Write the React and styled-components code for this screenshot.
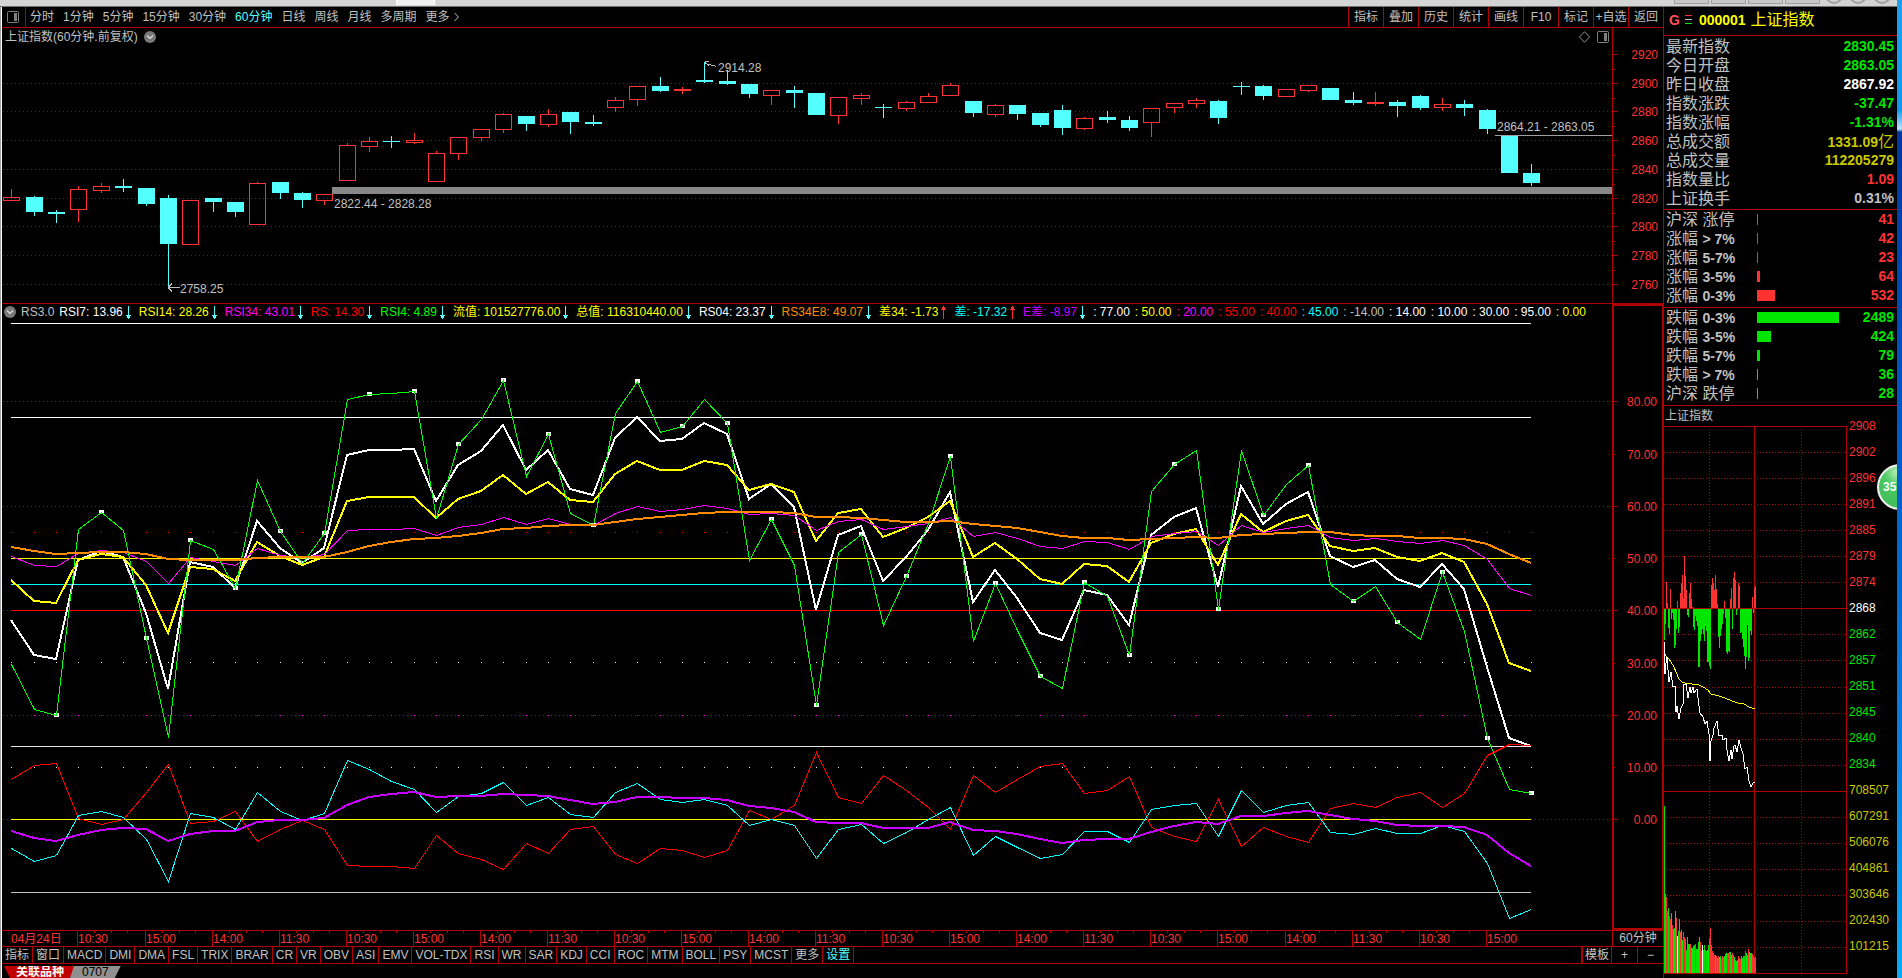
import React from 'react';
import styled, { createGlobalStyle } from 'styled-components';

const LINE = '#b00000';
const RED = '#ff3232';
const CYAN = '#54ffff';
const GREEN = '#00e600';
const GRAY = '#c0c0c0';

const periods = ['分时', '1分钟', '5分钟', '15分钟', '30分钟', '60分钟', '日线', '周线', '月线', '多周期', '更多'];
const tools = ['指标', '叠加', '历史', '统计', '画线', 'F10', '标记', '+自选', '返回'];
const indicators = [
  '指标', '窗口', 'MACD', 'DMI', 'DMA', 'FSL', 'TRIX', 'BRAR', 'CR', 'VR', 'OBV', 'ASI', 'EMV', 'VOL-TDX',
  'RSI', 'WR', 'SAR', 'KDJ', 'CCI', 'ROC', 'MTM', 'BOLL', 'PSY', 'MCST', '更多', '设置',
];

const readings = [
  { text: 'RSI7: 13.96', color: '#ffffff', dir: 'down' },
  { text: 'RSI14: 28.26', color: '#ffff00', dir: 'down' },
  { text: 'RSI34: 43.01', color: '#ff00ff', dir: 'down' },
  { text: 'RS: 14.30', color: '#ff0000', dir: 'down' },
  { text: 'RSI4: 4.89', color: '#00ff00', dir: 'down' },
  { text: '流值: 101527776.00', color: '#ffff00', dir: 'down' },
  { text: '总值: 116310440.00', color: '#ffff00', dir: 'down' },
  { text: 'RS04: 23.37', color: '#ffffff', dir: 'down' },
  { text: 'RS34E8: 49.07', color: '#ff8c00', dir: 'down' },
  { text: '差34: -1.73', color: '#ffff00', dir: 'up' },
  { text: '差: -17.32', color: '#00ffff', dir: 'up' },
  { text: 'E差: -8.97', color: '#c800ff', dir: 'down' },
];

const levels = [
  { text: ': 77.00', color: '#ffffff' },
  { text: ': 50.00', color: '#ffff00' },
  { text: ': 20.00', color: '#ff00ff' },
  { text: ': 55.00', color: '#ff0000' },
  { text: ': 40.00', color: '#ff0000' },
  { text: ': 45.00', color: '#00ffff' },
  { text: ': -14.00', color: '#c0c0c0' },
  { text: ': 14.00', color: '#ffffff' },
  { text: ': 10.00', color: '#ffffff' },
  { text: ': 30.00', color: '#ffffff' },
  { text: ': 95.00', color: '#ffffff' },
  { text: ': 0.00', color: '#ffff00' },
];

const quotes = [
  { name: '最新指数', value: '2830.45', color: GREEN },
  { name: '今日开盘', value: '2863.05', color: GREEN },
  { name: '昨日收盘', value: '2867.92', color: '#ffffff' },
  { name: '指数涨跌', value: '-37.47', color: GREEN },
  { name: '指数涨幅', value: '-1.31%', color: GREEN },
  { name: '总成交额', value: '1331.09', unit: '亿', color: '#c8c800' },
  { name: '总成交量', value: '112205279', color: '#c8c800' },
  { name: '指数量比', value: '1.09', color: RED },
  { name: '上证换手', value: '0.31%', color: GRAY },
];

const risers = [
  { name: '沪深 涨停', range: '', count: 41, bar: 1 },
  { name: '涨幅', range: '> 7%', count: 42, bar: 1 },
  { name: '涨幅', range: '5-7%', count: 23, bar: 1 },
  { name: '涨幅', range: '3-5%', count: 64, bar: 3 },
  { name: '涨幅', range: '0-3%', count: 532, bar: 18 },
];

const fallers = [
  { name: '跌幅', range: '0-3%', count: 2489, bar: 82 },
  { name: '跌幅', range: '3-5%', count: 424, bar: 14 },
  { name: '跌幅', range: '5-7%', count: 79, bar: 3 },
  { name: '跌幅', range: '> 7%', count: 36, bar: 1 },
  { name: '沪深 跌停', range: '', count: 28, bar: 1 },
];

// up/down, high, body top, body bottom, low
const candles = [
  ['u', 189, 197, 200, 200], ['d', 196, 197, 212, 216], ['d', 210, 212, 214, 223], ['u', 186, 189, 209, 222],
  ['u', 183, 186, 190, 193], ['d', 179, 186, 188, 192], ['d', 188, 188, 204, 206], ['d', 195, 198, 244, 286],
  ['u', 200, 200, 244, 244], ['d', 198, 198, 202, 212], ['d', 202, 202, 212, 217], ['u', 182, 183, 224, 224],
  ['d', 182, 182, 193, 199], ['d', 192, 193, 200, 208], ['u', 194, 194, 200, 205], ['u', 143, 145, 180, 180],
  ['u', 137, 141, 146, 152], ['d', 136, 141, 142, 148], ['u', 133, 140, 142, 144], ['u', 151, 153, 181, 181],
  ['u', 137, 137, 153, 160], ['u', 129, 129, 137, 141], ['u', 113, 114, 129, 133], ['d', 116, 116, 124, 131],
  ['u', 109, 114, 124, 127], ['d', 112, 112, 122, 134], ['d', 115, 122, 124, 126], ['u', 97, 100, 107, 112],
  ['u', 86, 86, 99, 106], ['d', 77, 86, 91, 92], ['u', 87, 89, 90, 94], ['d', 62, 80, 82, 83],
  ['d', 70, 81, 84, 85], ['d', 84, 84, 94, 98], ['u', 90, 90, 95, 105], ['d', 86, 90, 93, 108],
  ['d', 93, 93, 115, 115], ['u', 97, 97, 115, 124], ['u', 93, 95, 98, 105], ['d', 104, 107, 108, 118],
  ['u', 101, 102, 108, 111], ['u', 93, 96, 102, 102], ['u', 83, 85, 95, 95], ['d', 101, 101, 113, 117],
  ['u', 104, 105, 114, 117], ['d', 105, 105, 114, 120], ['d', 113, 113, 125, 127], ['d', 105, 110, 128, 135],
  ['u', 117, 118, 128, 130], ['d', 111, 117, 120, 123], ['d', 116, 120, 128, 131], ['u', 108, 108, 122, 137],
  ['u', 103, 103, 107, 113], ['u', 98, 100, 103, 108], ['d', 100, 101, 118, 124], ['d', 82, 86, 87, 95],
  ['d', 85, 86, 96, 100], ['u', 89, 89, 96, 96], ['u', 85, 85, 90, 92], ['d', 88, 88, 100, 100],
  ['d', 92, 100, 103, 105], ['u', 92, 102, 103, 106], ['d', 100, 102, 106, 117], ['d', 95, 96, 108, 110],
  ['u', 98, 104, 107, 111], ['d', 100, 104, 108, 116], ['d', 109, 110, 129, 134], ['d', 136, 136, 173, 173],
  ['d', 164, 173, 183, 186],
];

const rsi4 = [
  664, 709, 715, 529, 512, 530, 638, 737, 540, 549, 588, 480, 531, 563, 533, 399, 394, 393, 391, 518, 444, 419, 380,
  476, 434, 513, 525, 413, 381, 432, 426, 399, 423, 560, 519, 565, 705, 552, 534, 625, 576, 523, 456, 641, 583, 630,
  676, 688, 582, 596, 655, 491, 464, 450, 609, 450, 515, 484, 465, 584, 601, 586, 622, 639, 572, 631, 738, 789, 793,
];

const series = [
  {
    color: '#ffffff',
    width: 2,
    data: [
      620, 655, 659, 560, 551, 557, 613, 689, 562, 567, 588, 521, 548, 563, 548, 455, 450, 450, 449, 501, 465, 451,
      425, 470, 450, 489, 495, 438, 417, 441, 439, 423, 434, 499, 484, 507, 610, 535, 526, 581, 557, 530, 492, 602,
      570, 598, 633, 640, 590, 595, 625, 535, 517, 508, 587, 486, 524, 504, 492, 556, 567, 560, 579, 587, 564, 589,
      667, 738, 746,
    ],
  },
  {
    color: '#ffff00',
    width: 2,
    data: [
      580, 601, 603, 560, 554, 557, 585, 633, 567, 569, 581, 542, 556, 565, 557, 501, 497, 497, 497, 518, 499, 491,
      475, 494, 482, 500, 502, 474, 461, 470, 470, 461, 465, 490, 484, 492, 541, 513, 509, 537, 528, 517, 501, 557,
      543, 559, 579, 584, 564, 566, 582, 543, 534, 529, 565, 514, 532, 521, 515, 546, 551, 548, 557, 561, 553, 562,
      604, 663, 671,
    ],
  },
  {
    color: '#ff00ff',
    width: 1,
    data: [
      556, 565, 566, 553, 550, 552, 561, 583, 557, 561, 565, 548, 555, 557, 554, 530, 529, 529, 528, 535, 527, 524,
      517, 524, 518, 524, 525, 513, 506, 511, 509, 505, 508, 514, 513, 515, 530, 521, 519, 529, 526, 523, 517, 536,
      532, 538, 546, 548, 541, 542, 549, 536, 533, 531, 545, 525, 532, 528, 525, 537, 540, 538, 541, 543, 540, 545,
      559, 588, 595,
    ],
  },
  {
    color: '#ff0000',
    width: 1,
    data: [
      779, 765, 763, 818, 824, 819, 792, 764, 823, 821, 811, 841, 829, 820, 829, 865, 866, 866, 868, 835, 853, 859,
      869, 843, 853, 829, 826, 854, 863, 848, 850, 857, 850, 810, 819, 805, 752, 797, 803, 775, 790, 807, 829, 775,
      792, 779, 766, 763, 793, 790, 776, 827, 836, 841, 799, 846, 827, 836, 842, 808, 803, 807, 797, 792, 807, 793,
      755, 744, 745,
    ],
  },
  { color: '#00ff00', width: 1, data: rsi4 },
  {
    color: '#ff8c00',
    width: 2,
    data: [
      547, 551, 554, 553, 552, 552, 554, 559, 560, 560, 560, 558, 557, 557, 557, 552, 546, 542, 539, 538, 536, 533,
      529, 528, 526, 525, 525, 522, 519, 517, 515, 513, 512, 512, 512, 513, 517, 517, 518, 520, 522, 522, 521, 524,
      526, 528, 532, 536, 538, 538, 540, 539, 538, 537, 538, 535, 534, 533, 532, 532, 535, 536, 536, 538, 538, 539,
      544, 554, 563,
    ],
  },
  {
    color: '#00ffff',
    width: 1,
    data: [
      848, 861, 855, 815, 811, 817, 839, 881, 813, 817, 829, 792, 811, 820, 813, 760, 769, 781, 789, 812, 796, 793,
      782, 805, 797, 814, 817, 792, 783, 799, 802, 799, 805, 825, 819, 825, 858, 829, 824, 843, 832, 819, 807, 855,
      836, 847, 858, 854, 831, 831, 842, 809, 805, 803, 836, 790, 812, 805, 802, 832, 834, 828, 833, 833, 825, 831,
      863, 918, 909,
    ],
  },
  {
    color: '#c800ff',
    width: 2,
    data: [
      831, 838, 841, 835, 830, 828, 829, 841, 834, 831, 831, 822, 820, 820, 818, 805, 797, 794, 792, 797, 796, 796,
      794, 795, 796, 800, 804, 802, 797, 797, 798, 798, 800, 806, 808, 812, 822, 823, 823, 828, 828, 828, 822, 830,
      831, 834, 839, 843, 840, 839, 839, 832, 826, 822, 824, 816, 816, 813, 811, 815, 819, 821, 825, 826, 826, 827,
      835, 853, 866,
    ],
  },
];

const hLines = [
  { y: 323, color: '#ffffff' },
  { y: 417, color: '#ffffff' },
  { y: 558, color: '#ffff00' },
  { y: 584, color: '#00ffff' },
  { y: 610, color: '#ff0000' },
  { y: 746, color: '#e6e6e6' },
  { y: 819, color: '#ffff00' },
  { y: 892, color: '#c0c0c0' },
];

const dotRows = [
  { y: 532, color: '#ff0000' },
  { y: 662, color: '#ffffff' },
  { y: 715, color: '#ff00ff' },
  { y: 767, color: '#ffffff' },
];

// net strength per minute column, positive is drawn red
const strength = [
  -31, -15, 26, 5, -19, -25, 19, -10, -4, -11, -39, -36, -20, 7, -24, -18, 15, 25, 33, 10, 52, 32, 18, -6, -8, 15,
  25, 9, 1, -18, -21, -7, -12, -17, -58, -58, -32, -25, -20, -25, -32, -17, -22, -53, -53, -57, -60, 23, 30, 25, 18,
  33, 19, 4, -28, -39, -27, -20, -15, -5, 7, -9, -43, -45, -42, -43, 9, 20, -20, 30, 36, 28, -6, -1, 25, 22, -24,
  -23, -30, -38, -47, -60, -48, -16, -52, -49, -22, -26, 11, -4, 20, 22,
];

const volumes = [
  167, 79, 76, 62, 65, 57, 54, 60, 48, 44, 45, 62, 55, 37, 42, 54, 41, 43, 33, 41, 36, 34, 23, 36, 29, 29, 29, 25,
  25, 27, 28, 29, 24, 24, 31, 36, 31, 22, 28, 23, 28, 23, 22, 23, 28, 35, 45, 28, 22, 20, 18, 18, 17, 15, 17, 16,
  17, 15, 17, 16, 17, 19, 20, 20, 20, 21, 21, 18, 20, 18, 16, 13, 12, 13, 17, 15, 14, 17, 15, 17, 17, 22, 20, 18,
  24, 21, 20, 20, 19, 17, 15, 16,
];
const volumeSides =
  'ggrrgrrgrgggrwggrggrrrggggrggggrggggrrwggrgggrrrrrrgrgrggrrrgggrrrggrrggggrrrggggrggrgggrrrrg';
const sideColor = { g: GREEN, r: RED, w: '#ffffff' };

const averageLine = [
  [0, 226], [2, 230], [5, 233], [7, 236], [10, 241], [12, 246], [15, 253], [18, 256], [21, 257], [35, 259],
  [39, 261], [44, 264], [47, 268], [55, 270], [61, 272], [68, 275], [74, 277], [80, 278], [85, 281], [91, 283],
];
const priceLine = [
  [0, 215], [1, 248], [2, 237], [3, 231], [5, 256], [7, 246], [9, 261], [11, 260], [12, 286], [13, 280], [15, 293],
  [17, 282], [19, 278], [20, 258], [22, 258], [24, 272], [26, 261], [27, 267], [29, 261], [30, 267], [33, 263],
  [35, 280], [36, 287], [39, 291], [41, 298], [43, 295], [45, 308], [46, 335], [47, 315], [49, 309], [50, 302],
  [53, 295], [55, 310], [58, 309], [59, 314], [62, 312], [63, 324], [65, 335], [67, 324], [68, 333], [70, 320],
  [71, 319], [73, 326], [75, 314], [77, 322], [79, 328], [81, 343], [83, 341], [85, 355], [87, 361], [89, 357],
  [91, 356],
];

const trendLabels = [
  ['2908', RED], ['2902', RED], ['2896', RED], ['2891', RED], ['2885', RED], ['2879', RED], ['2874', RED],
  ['2868', '#ffffff'], ['2862', GREEN], ['2857', GREEN], ['2851', GREEN], ['2845', GREEN], ['2840', GREEN],
  ['2834', GREEN], ['708507', '#c8c800'], ['607291', '#c8c800'], ['506076', '#c8c800'], ['404861', '#c8c800'],
  ['303646', '#c8c800'], ['202430', '#c8c800'], ['101215', '#c8c800'],
];

const CANDLE_TOP = 46;
const RSI_TOP = 322;
const barX = (i) => Math.round(9.4 + i * 22.353);
const timeLabels = ['10:30', '15:00', '14:00', '11:30'];

const Arrow = ({ dir }) => (
  <ArrowIcon width='5' height='13' viewBox='0 0 5 13' aria-hidden='true'>
    {dir === 'down' ? (
      <path d='M2 0h1v9h2v1h-1v2h-1v1h-1v-1h-1v-2h-1v-1h2z' fill={CYAN} />
    ) : (
      <path d='M2 13h1V4h2V3H4V1H3V0H2v1H1v2H0v1h2z' fill={RED} />
    )}
  </ArrowIcon>
);

const PanelIcon = () => (
  <svg width='12' height='12' viewBox='0 0 12 12' aria-hidden='true'>
    <rect x='0.5' y='0.5' width='11' height='11' rx='1' fill='none' stroke='#808080' />
    <rect x='7' y='2' width='3' height='8' fill='#808080' />
  </svg>
);

const CircleDown = () => (
  <svg width='12' height='12' viewBox='0 0 12 12' aria-hidden='true'>
    <circle cx='6' cy='6' r='6' fill='#787878' />
    <path d='M3 4.5l3 3 3-3' fill='none' stroke='#e0e0e0' strokeWidth='1.2' />
  </svg>
);

const GridLine = ({ y }) => (
  <line x1='1' x2='100%' y1={y + 0.5} y2={y + 0.5} stroke={LINE} strokeDasharray='1 3' />
);

const CandleChart = () => (
  <Chart height='257' shapeRendering='crispEdges'>
    {[83, 111, 140, 169, 198, 226, 255, 284].map((y) => (
      <GridLine key={y} y={y - CANDLE_TOP} />
    ))}
    <rect x='330' y='141' width='100%' height='7' fill='#888888' />
    <rect x='1493' y='89' width='100%' height='1' fill='#a0a0a0' />
    {candles.map(([kind, high, top, bottom, low], i) => {
      const x = barX(i);
      const color = kind === 'u' ? RED : CYAN;
      const t = top - CANDLE_TOP;
      const b = bottom - CANDLE_TOP;
      return (
        <g key={i}>
          <rect x={x} y={high - CANDLE_TOP} width='1' height={Math.max(top - high, 0)} fill={color} />
          <rect x={x} y={b} width='1' height={Math.max(low - bottom, 0)} fill={color} />
          {kind === 'u' ? (
            <rect x={x - 7.5} y={t + 0.5} width='16' height={Math.max(b - t, 1)} fill='none' stroke={color} />
          ) : (
            <rect x={x - 8} y={t} width='17' height={b - t} fill={color} />
          )}
        </g>
      );
    })}
    <path d='M702.5 15.5h4M703 16l4 4M703.500 17.500l11 3' stroke={GRAY} fill='none' />
    <path d='M166 241.500h12M166 241.500l4 -4M166 241.500l4 4' stroke={GRAY} fill='none' />
    <Mark x='716' y='26'>2914.28</Mark>
    <Mark x='178' y='247'>2758.25</Mark>
    <Mark x='332' y='162'>2822.44 - 2828.28</Mark>
    <Mark x='1495' y='85'>2864.21 - 2863.05</Mark>
  </Chart>
);

const PriceAxis = () => (
  <Axis height='275' shapeRendering='crispEdges'>
    {[54, 83, 111, 140, 169, 198, 226, 255, 284].map((y, i) => (
      <g key={y}>
        <line x1='0' x2='5' y1={y - 27.5} y2={y - 27.5} stroke={LINE} />
        {i < 8 && <line x1='0' x2='2' y1={y - 12.5} y2={y - 12.5} stroke={LINE} />}
        <AxisText x='45' y={y - 23}>{2920 - i * 20}</AxisText>
      </g>
    ))}
  </Axis>
);

const IndicatorChart = () => (
  <Chart height='608' shapeRendering='crispEdges'>
    {[401, 506, 610, 715, 819].map((y) => (
      <GridLine key={y} y={y - RSI_TOP} />
    ))}
    {dotRows.map((row) =>
      candles.map((c, i) => (
        <rect key={row.y + '-' + i} x={barX(i)} y={row.y - RSI_TOP} width='1' height='1' fill={row.color} />
      ))
    )}
    {hLines.map((l) => (
      <rect key={l.y} x='9' y={l.y - RSI_TOP} width='1520' height='1' fill={l.color} />
    ))}
    {rsi4.map((y, i) =>
      i > 0 && i % 2 === 0 ? (
        <rect key={i} x={barX(i) - 2} y={y - RSI_TOP - 2} width='5' height='4' fill='#ffffff' />
      ) : null
    )}
    {series.map((s, n) => {
      const shift = s.width === 1 ? 0.5 : 0;
      return (
        <polyline
          key={n}
          points={s.data.map((y, i) => `${barX(i) + shift},${y - RSI_TOP + shift}`).join(' ')}
          fill='none'
          stroke={s.color}
          strokeWidth={s.width}
        />
      );
    })}
  </Chart>
);

const IndicatorAxis = () => (
  <Axis height='622' shapeRendering='crispEdges'>
    {[401, 454, 506, 558, 610, 663, 715, 767, 819].map((y, i) => (
      <g key={y}>
        <line x1='0' x2={i % 2 ? 1 : 4} y1={y - 305.5} y2={y - 305.5} stroke={LINE} />
        <AxisText x='43' y={y - 301}>{(80 - i * 10).toFixed(2)}</AxisText>
      </g>
    ))}
  </Axis>
);

const TimeAxis = () => (
  <Chart height='15' shapeRendering='crispEdges'>
    <TimeText x='9' y='12'>04月24日</TimeText>
    {Array.from({ length: 22 }, (_, n) => {
      const x = barX(3 + n * 3);
      return (
        <g key={n}>
          <rect x={x - 1} y='0' width='1' height='15' fill={LINE} />
          {n < 21 &&
            [16, 33, 49].map((d) => <rect key={d} x={x + d} y='0' width='1' height='2' fill={LINE} />)}
          <TimeText x={x} y='12'>{timeLabels[n % 4]}</TimeText>
        </g>
      );
    })}
  </Chart>
);

const trendY = (i) => Math.round(i * 26.05);

const TrendChart = () => (
  <Chart height='548' shapeRendering='crispEdges'>
    {trendLabels.map(([text], i) => (
      <line
        key={text}
        x1='0'
        x2='183'
        y1={trendY(i) + 0.5}
        y2={trendY(i) + 0.5}
        stroke={LINE}
        strokeDasharray={i % 7 === 0 ? undefined : '1 2'}
      />
    ))}
    <line x1='0' x2='183' y1='547.5' y2='547.5' stroke={LINE} />
    <line x1='45.5' x2='45.5' y1='0' y2='547' stroke={LINE} strokeDasharray='1 2' />
    <line x1='137.5' x2='137.5' y1='0' y2='547' stroke={LINE} strokeDasharray='1 2' />
    <line x1='90.5' x2='90.5' y1='0' y2='547' stroke={LINE} />
    <line x1='182.5' x2='182.5' y1='0' y2='547' stroke={LINE} />
    {strength.map((v, i) => (
      <rect
        key={i}
        x={i}
        y={v > 0 ? 182 - v : 183}
        width='1'
        height={Math.abs(v)}
        fill={v > 0 ? RED : GREEN}
      />
    ))}
    {volumes.map((v, i) => (
      <rect key={i} x={i} y={547 - v} width='1' height={v} fill={sideColor[volumeSides[i]]} />
    ))}
    <polyline points={averageLine.map((p) => p.join()).join(' ')} fill='none' stroke='#ffff00' />
    <polyline points={priceLine.map((p) => p.join()).join(' ')} fill='none' stroke='#ffffff' />
  </Chart>
);

const Breadth = ({ rows, color }) => (
  <Section $raised>
    {rows.map((row) => (
      <Row key={row.name + row.range}>
        <RangeName>
          {row.name} <b>{row.range}</b>
        </RangeName>
        <BarCell>
          <Bar $color={color} style={{ width: row.bar }} />
        </BarCell>
        <Value $color={color}>{row.count}</Value>
      </Row>
    ))}
  </Section>
);

const App = () => {
  return (
    <Screen>
      <GlobalStyle />
      <Window>
        <TitleBar>
          <TitleTab />
          <TitleButtons>
            <i />
            <i />
            <i />
            <i />
            <em />
            <em />
            <em />
          </TitleButtons>
        </TitleBar>
        <Body>
          <Main>
            <Toolbar>
              <IconButton aria-label='侧栏'>
                <PanelIcon />
              </IconButton>
              <Periods>
                {periods.map((p) => (
                  <PeriodButton key={p} $active={p === '60分钟'}>
                    {p}
                  </PeriodButton>
                ))}
                <svg width='5' height='10' viewBox='0 0 5 10' aria-hidden='true'>
                  <path d='M0.500 1l4 4-4 4' fill='none' stroke={GRAY} />
                </svg>
              </Periods>
              {tools.map((t) => (
                <ToolButton key={t}>{t}</ToolButton>
              ))}
            </Toolbar>

            <Panel>
              <PanelBody>
                <PanelHead>
                  <span>上证指数(60分钟.前复权)</span>
                  <CircleDown />
                  <HeadIcons>
                    <svg width='11' height='12' viewBox='0 0 11 12' aria-hidden='true'>
                      <path d='M5.500 0.700l5 5.300-5 5.300-5-5.300z' fill='none' stroke='#909090' />
                    </svg>
                    <PanelIcon />
                  </HeadIcons>
                </PanelHead>
                <CandleChart />
              </PanelBody>
              <AxisColumn>
                <PriceAxis />
              </AxisColumn>
            </Panel>

            <Panel>
              <PanelBody>
                <Readings>
                  <CircleDown />
                  <Reading $color={GRAY}>RS3.0</Reading>
                  {readings.map((r) => (
                    <Reading key={r.text} $color={r.color}>
                      {r.text}
                      <Arrow dir={r.dir} />
                    </Reading>
                  ))}
                  {levels.map((l) => (
                    <Level key={l.text} $color={l.color}>
                      {l.text}
                    </Level>
                  ))}
                </Readings>
                <IndicatorChart />
              </PanelBody>
              <AxisColumn $framed>
                <IndicatorAxis />
              </AxisColumn>
            </Panel>

            <TimeRow>
              <PanelBody>
                <TimeAxis />
              </PanelBody>
              <PeriodCell>60分钟</PeriodCell>
            </TimeRow>

            <TabRow>
              {indicators.map((name, i) => (
                <TabButton key={name + i} $active={name === '设置'}>
                  {name}
                </TabButton>
              ))}
              <Spacer />
              <EndButton $first>模板</EndButton>
              <EndButton>+</EndButton>
              <EndButton>−</EndButton>
            </TabRow>

            <Footer>
              <FooterTab $active>关联品种</FooterTab>
              <FooterTab>0707</FooterTab>
            </Footer>
          </Main>

          <Side>
            <SideHead>
              <Flag>G</Flag>
              <svg width='7' height='10' viewBox='0 0 7 10' shapeRendering='crispEdges' aria-hidden='true'>
                <rect width='7' height='1' fill={RED} />
                <rect y='4' width='7' height='1' fill={GRAY} />
                <rect y='8' width='7' height='1' fill={GREEN} />
              </svg>
              <Code>000001</Code>
              <Name>上证指数</Name>
            </SideHead>
            <Section>
              {quotes.map((q) => (
                <Row key={q.name}>
                  <span>{q.name}</span>
                  <Value $color={q.color}>
                    {q.value}
                    {q.unit && <small>{q.unit}</small>}
                  </Value>
                </Row>
              ))}
            </Section>
            <Breadth rows={risers} color={RED} />
            <Breadth rows={fallers} color={GREEN} />
            <TrendTitle>上证指数</TrendTitle>
            <Trend>
              <TrendChart />
              <TrendLabels>
                {trendLabels.map(([text, color]) => (
                  <TrendLabel key={text} $color={color}>
                    {text}
                  </TrendLabel>
                ))}
              </TrendLabels>
            </Trend>
            <BadgeClip>
              <Badge>35</Badge>
            </BadgeClip>
          </Side>
        </Body>
      </Window>
      <Desktop />
    </Screen>
  );
};

export default App;

const GlobalStyle = createGlobalStyle`
  body {
    margin: 0;
    background: #000;
    color: ${GRAY};
    font: 12px/15px 'Liberation Sans', 'Noto Sans CJK SC', sans-serif;
  }
  * {
    box-sizing: border-box;
  }
  button {
    margin: 0;
    padding: 0;
    border: 0;
    background: none;
    color: inherit;
    font: inherit;
    white-space: nowrap;
    cursor: pointer;
  }
  svg {
    display: block;
    flex-shrink: 0;
  }
`;

const Screen = styled.div`
  display: flex;
  min-height: 100vh;
`;

const Window = styled.div`
  display: flex;
  flex-direction: column;
  flex: 1;
  min-width: 0;
`;

const Desktop = styled.div`
  width: 5px;
  background: linear-gradient(
    #1ba1f2 0,
    #1098f0 110px,
    #bfe6fb 129px,
    #0038a0 132px,
    #0058c8 420px,
    #0a78e0 700px,
    #08aaf8 100%
  );
`;

const TitleBar = styled.div`
  display: flex;
  justify-content: space-between;
  height: 7px;
  overflow: hidden;
  background: #d4d4d4;
  border-bottom: 1px solid #707070;
`;

const TitleTab = styled.div`
  width: 39px;
  height: 5px;
  margin-left: 396px;
  background: #f0f0f0;
  border: solid #fff;
  border-width: 0 1px;
`;

const TitleButtons = styled.div`
  display: flex;
  gap: 2px;
  margin-right: 5px;
  i {
    width: 35px;
    height: 4px;
    background: #c8c8c8;
    border: 1px solid #a0a0a0;
    border-top: 0;
  }
  em {
    width: 18px;
    height: 18px;
    margin: -14px 1px 0 3px;
    border: 2px solid #a0a0a0;
    border-radius: 50%;
  }
`;

const Body = styled.div`
  display: flex;
  flex: 1;
  border-left: 1px solid #a0a0a0;
`;

const Main = styled.main`
  display: flex;
  flex-direction: column;
  flex: 1;
  min-width: 0;
  border-left: 1px solid #fff;
`;

const Toolbar = styled.div`
  display: flex;
  height: 21px;
  border-bottom: 1px solid ${LINE};
`;

const IconButton = styled.button`
  width: 24px;
  padding-left: 5px;
  border-right: 1px solid ${LINE};
`;

const Periods = styled.div`
  display: flex;
  align-items: center;
  flex: 1;
  gap: 9px;
  padding-left: 4px;
  svg {
    margin-left: -5px;
  }
`;

const PeriodButton = styled.button`
  color: ${(props) => (props.$active ? CYAN : GRAY)};
`;

const ToolButton = styled.button`
  width: 35px;
  border-left: 1px solid ${LINE};
`;

const Panel = styled.section`
  display: flex;
  border-bottom: 1px solid ${LINE};
`;

const PanelBody = styled.div`
  flex: 1;
  min-width: 0;
`;

const PanelHead = styled.div`
  display: flex;
  align-items: center;
  gap: 6px;
  height: 18px;
  padding: 0 3px;
`;

const HeadIcons = styled.div`
  display: flex;
  gap: 7px;
  margin-left: auto;
`;

const Chart = styled.svg`
  width: 100%;
  overflow: hidden;
`;

const Mark = styled.text`
  fill: ${GRAY};
`;

const AxisColumn = styled.div`
  width: 51px;
  border: solid ${LINE};
  border-width: ${(props) => (props.$framed ? '2px 1px 2px 2px' : '0 0 0 1px')};
`;

const Axis = styled.svg`
  width: 100%;
`;

const AxisText = styled.text`
  fill: ${RED};
  text-anchor: end;
`;

const TimeText = styled.text`
  fill: ${RED};
`;

const Readings = styled.div`
  display: flex;
  align-items: center;
  height: 18px;
  padding: 0 0 2px 2px;
  overflow: hidden;
  white-space: nowrap;
`;

const Reading = styled.span`
  display: flex;
  align-items: center;
  color: ${(props) => props.$color};
  margin-left: 5px;
`;

const ArrowIcon = styled.svg`
  margin: 0 3px;
`;

const Level = styled.span`
  margin-left: 5px;
  color: ${(props) => props.$color};
`;

const TimeRow = styled.div`
  display: flex;
  height: 16px;
  border-bottom: 1px solid ${LINE};
`;

const PeriodCell = styled.div`
  width: 51px;
  border-left: 1px solid ${LINE};
  text-align: center;
`;

const TabRow = styled.nav`
  display: flex;
  height: 17px;
  border-bottom: 1px solid ${LINE};
`;

const TabButton = styled.button`
  padding: 0 3px;
  border-right: 1px solid ${LINE};
  color: ${(props) => (props.$active ? CYAN : GRAY)};
`;

const Spacer = styled.div`
  flex: 1;
`;

const EndButton = styled.button`
  width: ${(props) => (props.$first ? '30px' : '26px')};
  border-left: ${(props) => (props.$first ? '2px' : '1px')} solid ${LINE};
`;

const Footer = styled.div`
  display: flex;
  height: 14px;
  padding: 2px 0 0 2px;
`;

const FooterTab = styled.button`
  height: 12px;
  padding: 0 12px;
  margin-right: -6px;
  background: ${(props) => (props.$active ? '#c00000' : '#909090')};
  color: ${(props) => (props.$active ? '#fff' : '#000')};
  font-size: 12px;
  line-height: 12px;
  font-weight: ${(props) => (props.$active ? 'bold' : 'normal')};
  clip-path: ${(props) =>
    props.$active
      ? 'polygon(0 0, 100% 0, calc(100% - 6px) 100%, 6px 100%)'
      : 'polygon(4px 0, 100% 0, calc(100% - 6px) 100%, 0 100%)'};
`;

const Side = styled.aside`
  position: relative;
  width: 234px;
  border-left: 1px solid ${LINE};
`;

const SideHead = styled.header`
  display: flex;
  align-items: center;
  height: 29px;
  padding: 0 5px 2px;
  border-bottom: 1px solid ${LINE};
  font-size: 16px;
  line-height: 20px;
  color: #ffff00;
  svg {
    margin: 0 7px 0 5px;
  }
`;

const Flag = styled.b`
  color: #ff5050;
  font-size: 14px;
`;

const Code = styled.b`
  font-size: 14px;
`;

const Name = styled.span`
  margin-left: 5px;
`;

const Section = styled.div`
  padding: ${(props) => (props.$raised ? '0 3px 2px 2px' : '1px 3px 1px 2px')};
  border-bottom: 1px solid ${LINE};
`;

const Row = styled.div`
  display: flex;
  justify-content: space-between;
  height: 19px;
  font-size: 16px;
  line-height: 19px;
  white-space: nowrap;
  b {
    font-size: 14px;
  }
`;

const RangeName = styled.span`
  width: 91px;
`;

const BarCell = styled.span`
  display: flex;
  align-items: center;
  flex: 1;
`;

const Bar = styled.span`
  height: 11px;
  background: ${(props) => props.$color};
`;

const Value = styled.span`
  color: ${(props) => props.$color};
  font-size: 14px;
  font-weight: bold;
  small {
    font-size: 16px;
    font-weight: normal;
  }
`;

const TrendTitle = styled.div`
  height: 20px;
  padding: 3px 1px;
`;

const Trend = styled.div`
  display: grid;
  grid-template-columns: 183px 1fr;
`;

const TrendLabels = styled.div`
  display: flex;
  flex-direction: column;
  margin-top: -7px;
`;

const TrendLabel = styled.span`
  height: 26px;
  padding-left: 2px;
  color: ${(props) => props.$color};
`;

const BadgeClip = styled.div`
  position: absolute;
  top: 457px;
  right: 0;
  width: 20px;
  height: 47px;
  overflow: hidden;
`;

const Badge = styled.div`
  width: 46px;
  height: 46px;
  padding: 14px 4px;
  border: 2px solid #f0f0f0;
  border-radius: 50%;
  background: radial-gradient(circle at 18px 6px, #b8f0b8, #48c860 14px, #40b858);
  color: #fff;
  font-size: 12px;
  font-weight: bold;
`;
